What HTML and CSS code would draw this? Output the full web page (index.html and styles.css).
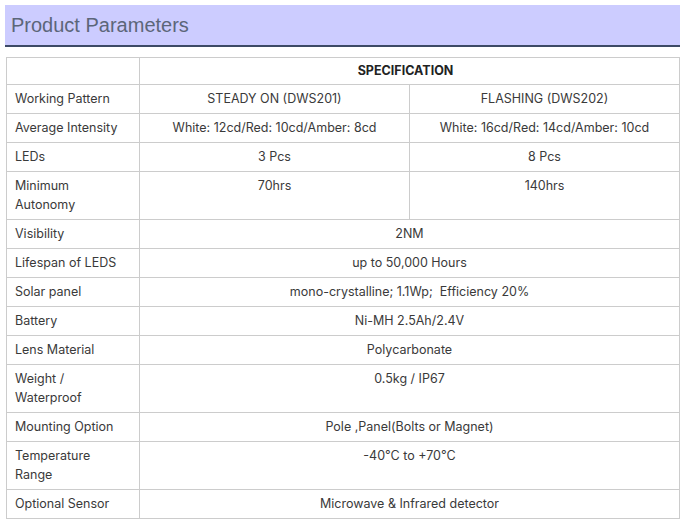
FILE: index.html
```html
<!DOCTYPE html>
<html>
<head>
<meta charset="utf-8">
<link rel="stylesheet" href="styles.css">
</head>
<body>
<div class="page">
  <h2 class="title">Product Parameters</h2>
  <table class="params">
    <colgroup>
      <col class="c1"><col class="c2"><col class="c3">
    </colgroup>
    <tr class="head"><td></td><td colspan="2" class="spec">SPECIFICATION</td></tr>
    <tr><td class="label">Working Pattern</td><td>STEADY ON (DWS201)</td><td>FLASHING (DWS202)</td></tr>
    <tr><td class="label">Average Intensity</td><td>White: 12cd/Red: 10cd/Amber: 8cd</td><td>White: 16cd/Red: 14cd/Amber: 10cd</td></tr>
    <tr><td class="label">LEDs</td><td>3 Pcs</td><td>8 Pcs</td></tr>
    <tr><td class="label">Minimum<br>Autonomy</td><td>70hrs</td><td>140hrs</td></tr>
    <tr><td class="label">Visibility</td><td colspan="2">2NM</td></tr>
    <tr><td class="label">Lifespan of LEDS</td><td colspan="2">up to 50,000 Hours</td></tr>
    <tr><td class="label">Solar panel</td><td colspan="2">mono-crystalline; 1.1Wp;&nbsp; Efficiency 20%</td></tr>
    <tr><td class="label">Battery</td><td colspan="2">Ni-MH 2.5Ah/2.4V</td></tr>
    <tr><td class="label">Lens Material</td><td colspan="2">Polycarbonate</td></tr>
    <tr><td class="label">Weight /<br>Waterproof</td><td colspan="2">0.5kg / IP67</td></tr>
    <tr><td class="label">Mounting Option</td><td colspan="2">Pole ,Panel(Bolts or Magnet)</td></tr>
    <tr><td class="label">Temperature<br>Range</td><td colspan="2">-40℃ to +70℃</td></tr>
    <tr><td class="label">Optional Sensor</td><td colspan="2">Microwave &amp; Infrared detector</td></tr>
  </table>
</div>
</body>
</html>
```
FILE: styles.css
```css
html, body {
  margin: 0;
  padding: 0;
  background: #ffffff;
}
.page {
  padding: 5px 8px 0 5px;
  width: 675px;
}
.title {
  margin: 0;
  height: 40px;
  line-height: 41px;
  padding-left: 6px;
  background: #ccccff;
  border-bottom: 2px solid #3d4a66;
  font-family: "Liberation Sans", Arial, sans-serif;
  font-weight: normal;
  font-size: 20px;
  color: #5c6679;
}
.params {
  margin: 10px 0 0 1px;
  width: 674px;
  border-collapse: collapse;
  table-layout: fixed;
  font-family: Inter, "Noto Sans", sans-serif;
  font-size: 12.5px;
  color: #3a3a3a;
}
.c1 { width: 133px; }
.c2 { width: 270px; }
.c3 { width: 270px; }
.params td {
  border: 1px solid #cccccc;
  padding: 4px 8px 5px 8px;
  line-height: 19px;
  vertical-align: top;
  text-align: center;
}
.params td.label {
  text-align: left;
}
.params tr.head td {
  line-height: 17px;
  padding-top: 4px;
  padding-bottom: 5px;
}
.params td.spec {
  font-weight: bold;
  font-size: 12.5px;
  color: #222222;
  padding-right: 16px;
}
```
